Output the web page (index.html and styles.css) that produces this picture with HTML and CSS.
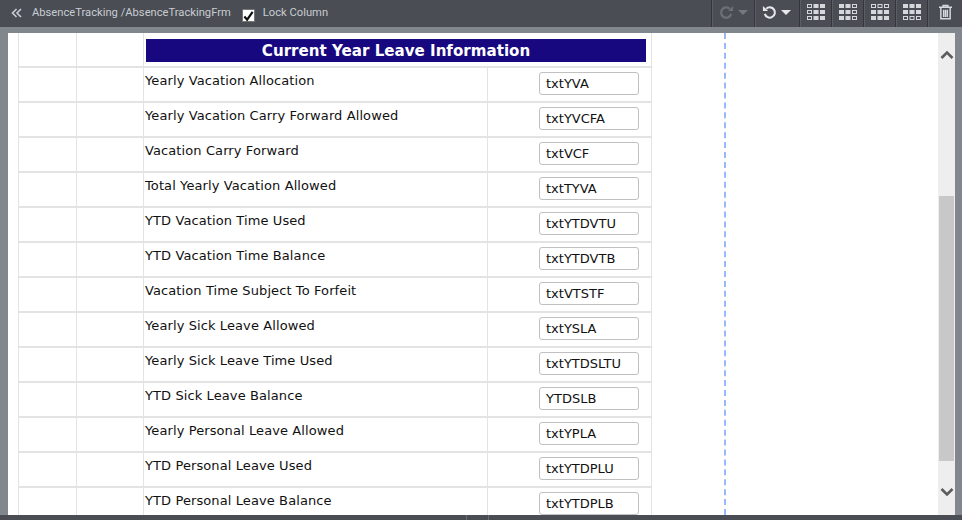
FILE: index.html
```html
<!DOCTYPE html>
<html lang="en">
<head>
<meta charset="utf-8">
<title>AbsenceTrackingFrm</title>
<link rel="stylesheet" href="styles.css">
</head>
<body>
<header class="toolbar">
  <div class="crumbs">
    <svg class="chev" width="12" height="10" viewBox="0 0 12 10"><path d="M5.5 1 1.5 5l4 4M10 1 6 5l4 4" fill="none" stroke="#c9ced6" stroke-width="1.6"/></svg>
    <span class="path">AbsenceTracking /AbsenceTrackingFrm</span>
    <span class="check"><svg width="12" height="12" viewBox="0 0 12 12"><path d="M1.5 6.5 4.5 10 10.5 1.5" fill="none" stroke="#111" stroke-width="2.4"/></svg></span>
    <span class="lock">Lock Column</span>
  </div>
  <div class="tools">
    <div class="tool t-redo">
      <svg width="15" height="15" viewBox="0 0 16 16"><path d="M13 9.5A5.5 5.5 0 1 1 11.5 4" fill="none" stroke="#6d7076" stroke-width="2.4"/><path d="M9.5 6.5h5.5V1z" fill="#6d7076"/></svg>
      <i class="caret dim"></i>
    </div>
    <div class="tool t-undo">
      <svg width="15" height="15" viewBox="0 0 16 16"><path d="M3 9.5A5.5 5.5 0 1 0 4.5 4" fill="none" stroke="#e6e8ea" stroke-width="2.2"/><path d="M6.5 6.5H1V1z" fill="#e6e8ea"/></svg>
      <i class="caret"></i>
    </div>
    <div class="tool t-grid"><svg width="18" height="16" viewBox="0 0 18 16"><g fill="#d5d8db"><rect x="6.500" y="0" width="5" height="4"/><rect x="13" y="0" width="5" height="4"/><rect x="6.500" y="6" width="5" height="4"/><rect x="13" y="6" width="5" height="4"/><rect x="6.500" y="12" width="5" height="4"/><rect x="13" y="12" width="5" height="4"/></g><g fill="none" stroke="#d5d8db"><rect x=".5" y=".5" width="4" height="3"/><rect x=".5" y="6.500" width="4" height="3"/><rect x=".5" y="12.500" width="4" height="3"/></g></svg></div>
    <div class="tool t-grid"><svg width="18" height="16" viewBox="0 0 18 16"><g fill="#d5d8db"><rect x="0" y="0" width="5" height="4"/><rect x="6.500" y="0" width="5" height="4"/><rect x="0" y="6" width="5" height="4"/><rect x="6.500" y="6" width="5" height="4"/><rect x="0" y="12" width="5" height="4"/><rect x="6.500" y="12" width="5" height="4"/></g><g fill="none" stroke="#d5d8db"><rect x="13.500" y=".5" width="4" height="3"/><rect x="13.500" y="6.500" width="4" height="3"/><rect x="13.500" y="12.500" width="4" height="3"/></g></svg></div>
    <div class="tool t-grid"><svg width="18" height="16" viewBox="0 0 18 16"><g fill="#d5d8db"><rect x="0" y="6" width="5" height="4"/><rect x="6.500" y="6" width="5" height="4"/><rect x="13" y="6" width="5" height="4"/><rect x="0" y="12" width="5" height="4"/><rect x="6.500" y="12" width="5" height="4"/><rect x="13" y="12" width="5" height="4"/></g><g fill="none" stroke="#d5d8db"><rect x=".5" y=".5" width="4" height="3"/><rect x="7" y=".5" width="4" height="3"/><rect x="13.500" y=".5" width="4" height="3"/></g></svg></div>
    <div class="tool t-grid"><svg width="18" height="16" viewBox="0 0 18 16"><g fill="#d5d8db"><rect x="0" y="0" width="5" height="4"/><rect x="6.500" y="0" width="5" height="4"/><rect x="13" y="0" width="5" height="4"/><rect x="0" y="6" width="5" height="4"/><rect x="6.500" y="6" width="5" height="4"/><rect x="13" y="6" width="5" height="4"/></g><g fill="none" stroke="#d5d8db"><rect x=".5" y="12.500" width="4" height="3"/><rect x="7" y="12.500" width="4" height="3"/><rect x="13.500" y="12.500" width="4" height="3"/></g></svg></div>
    <div class="tool t-trash"><svg width="13" height="16" viewBox="0 0 14 16"><g fill="none" stroke="#d5dade" stroke-width="1.600"><path d="M0 3h14M4.500 3V1h5v2M2 3v12.200h10V3"/><path d="M5 5.500v8M7 5.500v8M9 5.500v8"/></g></svg></div>
  </div>
</header>

<main class="stage">
  <div class="panel">
    <div class="form">
      <div class="row">
        <div class="gutter"></div><div class="gutter second"></div>
        <div class="title-cell"><h1 class="title">Current Year Leave Information</h1></div>
      </div>
      <div class="row"><div class="gutter"></div><div class="gutter second"></div><div class="label">Yearly Vacation Allocation</div><div class="value"><span class="input">txtYVA</span></div></div>
      <div class="row"><div class="gutter"></div><div class="gutter second"></div><div class="label">Yearly Vacation Carry Forward Allowed</div><div class="value"><span class="input">txtYVCFA</span></div></div>
      <div class="row"><div class="gutter"></div><div class="gutter second"></div><div class="label">Vacation Carry Forward</div><div class="value"><span class="input">txtVCF</span></div></div>
      <div class="row"><div class="gutter"></div><div class="gutter second"></div><div class="label">Total Yearly Vacation Allowed</div><div class="value"><span class="input">txtTYVA</span></div></div>
      <div class="row"><div class="gutter"></div><div class="gutter second"></div><div class="label">YTD Vacation Time Used</div><div class="value"><span class="input">txtYTDVTU</span></div></div>
      <div class="row"><div class="gutter"></div><div class="gutter second"></div><div class="label">YTD Vacation Time Balance</div><div class="value"><span class="input">txtYTDVTB</span></div></div>
      <div class="row"><div class="gutter"></div><div class="gutter second"></div><div class="label">Vacation Time Subject To Forfeit</div><div class="value"><span class="input">txtVTSTF</span></div></div>
      <div class="row"><div class="gutter"></div><div class="gutter second"></div><div class="label">Yearly Sick Leave Allowed</div><div class="value"><span class="input">txtYSLA</span></div></div>
      <div class="row"><div class="gutter"></div><div class="gutter second"></div><div class="label">Yearly Sick Leave Time Used</div><div class="value"><span class="input">txtYTDSLTU</span></div></div>
      <div class="row"><div class="gutter"></div><div class="gutter second"></div><div class="label">YTD Sick Leave Balance</div><div class="value"><span class="input">YTDSLB</span></div></div>
      <div class="row"><div class="gutter"></div><div class="gutter second"></div><div class="label">Yearly Personal Leave Allowed</div><div class="value"><span class="input">txtYPLA</span></div></div>
      <div class="row"><div class="gutter"></div><div class="gutter second"></div><div class="label">YTD Personal Leave Used</div><div class="value"><span class="input">txtYTDPLU</span></div></div>
      <div class="row"><div class="gutter"></div><div class="gutter second"></div><div class="label">YTD Personal Leave Balance</div><div class="value"><span class="input">txtYTDPLB</span></div></div>
    </div>
    <div class="guide"></div>
    <div class="scrollbar">
      <svg class="arrow" width="14" height="10" viewBox="0 0 14 10"><path d="M1.500 8 7 2.500 12.500 8" fill="none" stroke="#5c5c5c" stroke-width="2.600"/></svg>
      <div class="track"><div class="thumb"></div></div>
      <svg class="arrow" width="14" height="10" viewBox="0 0 14 10"><path d="M1.500 2 7 7.500 12.500 2" fill="none" stroke="#5c5c5c" stroke-width="2.600"/></svg>
    </div>
  </div>
</main>
<footer class="statusbar"><span class="sep s1"></span><span class="sep s2"></span></footer>
</body>
</html>
```

FILE: styles.css
```css
* { box-sizing: border-box; }
html, body { margin: 0; height: 100%; }
body {
  width: 962px; height: 520px; overflow: hidden;
  display: flex; flex-direction: column;
  background: #82878e;
  font-family: "DejaVu Sans", Verdana, sans-serif;
}
.toolbar {
  height: 27px; flex: none;
  background: #4a4d54;
  display: flex; justify-content: space-between;
  padding-left: 1px;
}
.crumbs { display: flex; align-items: flex-start; font: 11.2px/1 Roboto, sans-serif; color: #c8ccd2; }
.chev { margin: 8px 0 0 10px; }
.path { margin: 7px 0 0 9px; }
.check {
  width: 13px; height: 13px; margin: 9px 0 0 11px;
  background: #fff; border: 1px solid #777; border-radius: 1px;
  display: flex; align-items: center; justify-content: center;
}
.lock { margin: 7px 0 0 8px; }
.tools { display: flex; height: 27px; }
.tool {
  display: flex; align-items: center; justify-content: center; gap: 4px;
  border-left: 1px solid #34363b; padding-bottom: 3px;
  box-shadow: inset 1px 0 0 #5a5d64;
}
.t-redo { width: 43px; }
.t-undo { width: 45px; padding-right: 2px; }
.t-grid { width: 32px; }
.t-trash { width: 35px; }
.caret { width: 0; height: 0; border-left: 5px solid transparent; border-right: 5px solid transparent; border-top: 5px solid #e6e8ea; }
.caret.dim { border-top-color: #75787d; }

.stage { flex: 1; min-height: 0; padding: 6px 7px 0 8px; display: flex; }
.panel { flex: 1; background: #fff; display: flex; position: relative; overflow: hidden; }
.form { width: 634px; margin-left: 10px; flex: none; font-size: 13px; letter-spacing: .1px; color: #111; }
.row { display: flex; height: 35px; border-bottom: 2px solid #e3e3e3; border-right: 1px solid #e3e3e3; }
.row:last-child { border-bottom: 0; }
.gutter { width: 58px; flex: none; border-left: 1px solid #e3e3e3; }
.gutter.second { width: 67px; }
.title-cell { flex: 1; border-left: 1px solid #e3e3e3; padding: 6px 5px 0 2px; }
.title {
  margin: 0; height: 23px; background: #180880; color: #fff;
  font: bold 15.1px/24px "DejaVu Sans", sans-serif; letter-spacing: 0; text-align: center;
}
.label { width: 344px; flex: none; border-left: 1px solid #e3e3e3; padding: 5px 0 0 1px; line-height: 16px; white-space: nowrap; }
.value { flex: 1; border-left: 1px solid #e3e3e3; padding: 4px 0 0 51px; }
.input {
  display: block; width: 100px; height: 23px;
  border: 1px solid #c0c0c0; border-radius: 3px;
  padding: 0 0 0 6px; font-size: 13px; letter-spacing: 0; line-height: 22px; background: #fff; color: #111;
}
.guide { width: 0; height: 100%; margin-left: 72px; border-left: 2px dashed #99b9fb; }
.scrollbar {
  position: absolute; right: 0; top: 0; bottom: 0; width: 17px;
  background: #eeeeee; display: flex; flex-direction: column; align-items: center;
}
.arrow { flex: none; margin: 17px 0 18px; }
.track { flex: 1; width: 100%; padding: 0 1px 9px; display: flex; flex-direction: column; justify-content: flex-end; }
.thumb { height: 265px; background: #c8c8c8; }
.statusbar { height: 5px; flex: none; background: #4a4d54; display: flex; }
.sep { width: 1px; background: #6a6d73; }
.s1 { margin-left: 466px; }
.s2 { margin-left: 21px; }
```
